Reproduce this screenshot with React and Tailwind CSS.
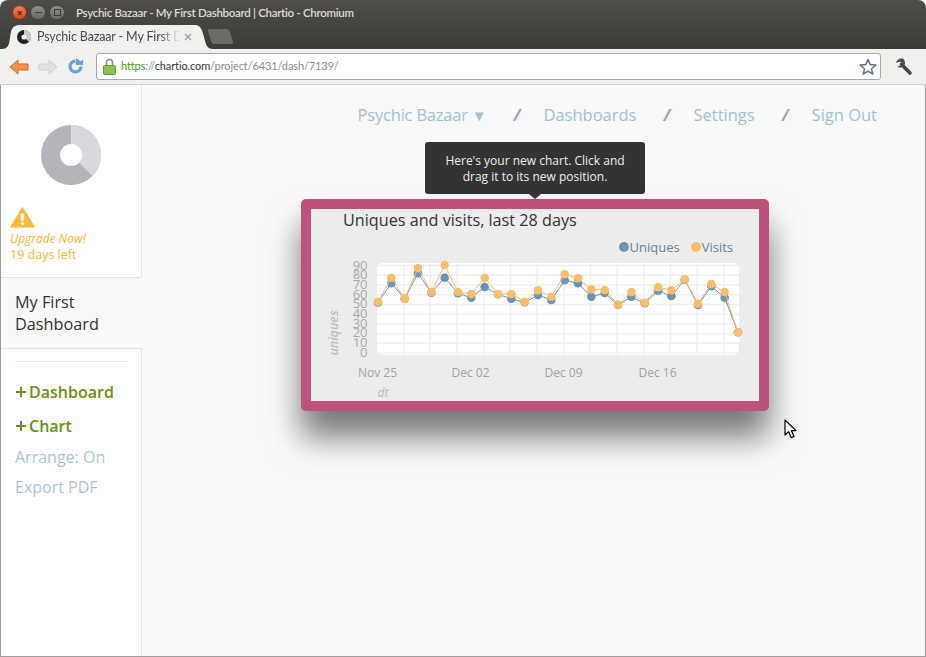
import React from 'react';

const XS = Array.from({ length: 28 }, (_, i) => 378 + (i * 40) / 3);
const UNIQUES = [302.5, 283.3, 298.7, 273.3, 292.7, 277.7, 293.3, 297.7, 287, 294.3, 298.7, 302.3, 295, 300, 280.3, 283.3, 296.7, 293, 305, 296.7, 303.3, 290.7, 296, 279.7, 305, 286.3, 297.7, 332.3];
const VISITS = [301.7, 277.7, 298.7, 268, 292, 265, 292, 294, 277.7, 294, 294, 301.7, 290.3, 296.7, 274.3, 278.3, 289.3, 290, 304.7, 292, 302.7, 287.3, 290.3, 279.3, 303.7, 284, 292, 332.3];
const Y_LABELS = [90, 80, 70, 60, 50, 40, 30, 20, 10, 0];
const X_LABELS = [['Nov 25', 377.5], ['Dec 02', 470.5], ['Dec 09', 563.5], ['Dec 16', 657.5]];

const toPoints = ys => ys.map((y, i) => `${XS[i].toFixed(1)},${y}`).join(' ');

function Chart() {
  // viewBox uses page coordinates, the card interior starts at 311,209
  return (
    <svg viewBox="311 259 448 142" className="block w-[448px] h-[142px] overflow-visible">
      <rect x="377" y="263" width="362" height="92" rx="6" fill="#ffffff" />
      {Array.from({ length: 13 }, (_, i) => (
        <line key={i} x1={403.7 + i * 26.67} x2={403.7 + i * 26.67} y1="263" y2="355" stroke="#f0f0f0" strokeWidth="1.5" />
      ))}
      {Array.from({ length: 10 }, (_, i) => (
        <line key={i} x1="377" x2="739" y1={265.6 + i * 9.72} y2={265.6 + i * 9.72} stroke="#f0f0f0" strokeWidth="1.5" />
      ))}
      {Y_LABELS.map((v, i) => (
        <text key={v} x="367.5" y={269.5 + i * 9.67} textAnchor="end" fontSize="13" fill="#a9a9a9">{v}</text>
      ))}
      {X_LABELS.map(([t, x]) => (
        <text key={t} x={x} y="377" textAnchor="middle" fontSize="12" fill="#a3a3a3">{t}</text>
      ))}
      <text x="383" y="397" textAnchor="middle" fontSize="12" fontStyle="italic" fill="#b9b9b9">dt</text>
      <text transform="translate(338,333) rotate(-90)" x="0" y="0" textAnchor="middle" fontSize="12.5" fontStyle="italic" fontWeight="600" fill="#bdbdbd">uniques</text>
      <polyline points={toPoints(UNIQUES)} fill="none" stroke="#6b94b4" strokeWidth="1" />
      {UNIQUES.map((y, i) => <circle key={i} cx={XS[i]} cy={y} r="4.3" fill="#6b94b4" />)}
      <polyline points={toPoints(VISITS)} fill="none" stroke="#fbbd68" strokeWidth="1" />
      {VISITS.map((y, i) => <circle key={i} cx={XS[i]} cy={y} r="4.3" fill="#fbbd68" />)}
    </svg>
  );
}

function Donut({ className, light, dark, hole }) {
  return (
    <svg viewBox="0 0 60 60" className={className}>
      <circle cx="30" cy="30" r="30" fill={dark} />
      <path d="M30 30V0A30 30 0 0 1 51.5 51Z" fill={light} />
      <circle cx="30" cy="30" r="11" fill={hole} />
    </svg>
  );
}

function Browser() {
  return (
    <div className="shrink-0 h-[85px] flex flex-col border-b border-[#d2d1cf]">
      <div className="h-[49px] flex flex-col bg-gradient-to-b from-[#4f4d48] to-[#3c3b36] rounded-t-[8px]">
        {/* title bar */}
        <div className="h-[25px] flex items-center pl-[12px]">
          <span className="w-[15px] h-[15px] rounded-full bg-gradient-to-b from-[#f08050] to-[#d8471e] border border-[#6a3a28] flex items-center justify-center text-[#5a2412] text-[10px] leading-none font-bold">×</span>
          <span className="ml-[3px] w-[16px] h-[15px] rounded-full bg-gradient-to-b from-[#8f8d87] to-[#6c6a65] border border-[#45433f] flex items-center justify-center">
            <span className="w-[7px] h-[1.5px] bg-[#3b3a36]" />
          </span>
          <span className="ml-[3px] w-[16px] h-[15px] rounded-full bg-gradient-to-b from-[#8f8d87] to-[#6c6a65] border border-[#45433f] flex items-center justify-center">
            <span className="w-[7px] h-[7px] border border-[#3b3a36]" />
          </span>
          <span className="ml-[11px] text-[11.5px] font-semibold text-[#dfdbd2] font-['Lato',sans-serif] tracking-[-0.3px] whitespace-nowrap">Psychic Bazaar - My First Dashboard | Chartio - Chromium</span>
        </div>
        {/* tab strip */}
        <div className="h-[24px] flex items-end">
          <div className="relative w-[211px] h-[24px] ml-[2px] flex items-center pl-[15px]">
            <svg viewBox="0 0 211 24" className="absolute inset-0 w-[211px] h-[24px]">
              <path d="M0 24C6 24 7 20 8 13C9 5 10 0 18 0H193C199 0 200 5 202 12C204 20 205 24 211 24Z" fill="#f1f0ee" />
            </svg>
            <Donut className="relative w-[14px] h-[14px]" light="#c9c9c9" dark="#222222" hole="#f1f0ee" />
            <span className="relative ml-[6px] w-[143px] overflow-hidden whitespace-nowrap text-[12.5px] leading-[16px] text-[#4a4a4a] font-['Lato',sans-serif] tracking-[-0.15px] [mask-image:linear-gradient(to_right,black_85%,transparent)]">Psychic Bazaar - My First Dashboard</span>
            <svg viewBox="0 0 8 8" className="relative ml-[4px] w-[8px] h-[8px]">
              <path d="M1 1L7 7M7 1L1 7" stroke="#a8a8a8" strokeWidth="1.6" />
            </svg>
          </div>
          <svg viewBox="0 0 26 15" className="w-[26px] h-[15px] mb-[5px] -ml-[5px]">
            <path d="M1 0H18C20 0 21 1 22 3L25 13C25 14 25 15 23 15H6C4 15 4 14 3 12L0 2C0 1 0 0 1 0Z" fill="#6c6b67" />
          </svg>
        </div>
      </div>
      {/* toolbar */}
      <div className="flex-1 flex items-center bg-[#f1f0ee] pl-[9px]">
        <svg viewBox="0 0 20 16" className="w-[20px] h-[16px]">
          <path d="M9 1L1 8L9 15V11H19V5H9Z" fill="#ee9153" stroke="#cf6a2c" strokeWidth="1" strokeLinejoin="round" />
        </svg>
        <svg viewBox="0 0 20 16" className="ml-[9px] w-[20px] h-[16px]">
          <path d="M11 1L19 8L11 15V11H1V5H11Z" fill="#e1e1df" stroke="#d2d2d0" strokeWidth="1" strokeLinejoin="round" />
        </svg>
        <svg viewBox="0 0 18 18" className="ml-[9px] w-[17px] h-[17px]">
          <path d="M9 3.2A5.8 5.8 0 1 0 14.8 9" fill="none" stroke="#6a9fd8" strokeWidth="3.4" />
          <path d="M9.5 0V7.5L17 7.5V1.5L14.5 3.5Z" fill="#6a9fd8" />
        </svg>
        <div className="ml-[12px] w-[785px] h-[27px] bg-white border border-[#a8a7a3] rounded-[3px] flex items-center pl-[6px] pr-[3px]">
          <svg viewBox="0 0 13 17" className="w-[13px] h-[17px]">
            <path d="M3.5 8V4.5A3 3 0 0 1 9.5 4.5V8" fill="none" stroke="#8d8d8d" strokeWidth="1.6" />
            <rect x="0.5" y="7.5" width="12" height="9" rx="1" fill="#8cc152" stroke="#5d9a2c" />
          </svg>
          <span className="ml-[5px] text-[11px] font-['Lato',sans-serif] tracking-[-0.12px] whitespace-nowrap text-[#8c8c8c]">
            <span className="text-[#3f9b0c]">https</span>://<span className="text-[#333333]">chartio.com</span>/project/6431/dash/7139/
          </span>
          <svg viewBox="0 0 18 18" className="ml-auto w-[18px] h-[18px]">
            <path d="M9 1.5L11.2 6.6L16.7 7.1L12.5 10.7L13.8 16.1L9 13.2L4.2 16.1L5.5 10.7L1.3 7.1L6.8 6.6Z" fill="none" stroke="#5c6f8c" strokeWidth="1.5" strokeLinejoin="round" />
          </svg>
        </div>
        <svg viewBox="0 0 18 18" className="ml-[14px] w-[18px] h-[18px]">
          <path d="M6.5 6.5L15 15" stroke="#4a4a48" strokeWidth="3.6" strokeLinecap="round" />
          <path d="M8.2 0.8C5 0 1.6 1.6 1 5L4.6 3.4L6.8 4.6L6.4 7.4L2.2 8.4C4.4 10.4 8.4 9.8 9.8 6.8C10.4 5 9.8 2.4 8.2 0.8Z" fill="#4a4a48" />
        </svg>
      </div>
    </div>
  );
}

function PlusItem({ label, className }) {
  return (
    <p className={`h-[22px] flex items-center gap-[3px] text-[16px] leading-[22px] font-semibold text-[#6a9113] whitespace-nowrap ${className}`}>
      <svg viewBox="0 0 10 10" className="w-[10px] h-[10px] ml-[1px]">
        <path d="M5 0V10M0 5H10" stroke="#6a9113" strokeWidth="2" />
      </svg>
      {label}
    </p>
  );
}

function Sidebar() {
  return (
    <aside className="w-[141px] shrink-0 flex flex-col">
      <div className="h-[193px] bg-white border-r border-b border-[#e4e4e4] flex flex-col pt-[40px]">
        <Donut className="w-[60px] h-[60px] ml-[40px]" light="#d8d9dc" dark="#b4b5ba" hole="#ffffff" />
        <svg viewBox="0 0 26 22" className="ml-[9px] mt-[21px] w-[25px] h-[22px]">
          <path d="M13 1L25.5 21.5H0.5Z" fill="#fdb93b" stroke="#fdb93b" strokeLinejoin="round" />
          <rect x="11.3" y="7" width="3.4" height="8" rx="1.2" fill="#ffffff" />
          <circle cx="13" cy="18" r="1.8" fill="#ffffff" />
        </svg>
        <p className="ml-[9px] mt-[3px] text-[12px] leading-[16px] italic font-medium text-[#fdb22e]">Upgrade Now!</p>
        <p className="ml-[9px] text-[12.5px] leading-[16px] font-medium text-[#fdb22e]">19 days left</p>
      </div>
      <div className="h-[71px] pl-[14px] pt-[13px] border-b border-[#e4e4e4] text-[16.25px] leading-[22px] text-[#333333]">My First<br />Dashboard</div>
      <div className="flex-1 bg-white border-r border-[#e4e4e4] px-[14px] pt-[12px]">
        <div className="border-t border-[#e6e6e6]" />
        <PlusItem label="Dashboard" className="mt-[19px]" />
        <PlusItem label="Chart" className="mt-[12px]" />
        <p className="mt-[9px] h-[22px] text-[16px] leading-[22px] text-[#a9c4da]">Arrange: On</p>
        <p className="mt-[8px] h-[22px] text-[16px] leading-[22px] text-[#a9c4da]">Export PDF</p>
      </div>
    </aside>
  );
}

function TopNav() {
  const slash = <span className="font-bold italic text-[#94a9b8] translate-x-[2px]">/</span>;
  return (
    <nav className="flex justify-end items-center gap-[25px] pr-[48px] pt-[18px] text-[16.5px] leading-[24px] text-[#a3bfd2]">
      <span className="tracking-[-0.2px]">Psychic Bazaar<span className="ml-[4px] text-[15px]">▼</span></span>
      {slash}
      <span>Dashboards</span>
      {slash}
      <span>Settings</span>
      {slash}
      <span>Sign Out</span>
    </nav>
  );
}

export default function App() {
  return (
    <div className="relative w-[926px] h-[657px] overflow-hidden flex flex-col bg-white font-['Open_Sans',sans-serif]">
      <Browser />
      <div className="flex-1 flex min-h-0 bg-[#f9f9f9] border-x border-b border-[#a09d98]">
        <Sidebar />
        <main className="flex-1">
          <TopNav />
        </main>
      </div>

      {/* tooltip */}
      <div className="absolute left-[425px] top-[142px] w-[220px] h-[52px] bg-[#333333] rounded-[3px] pt-[11px] text-center text-[12px] leading-[16px] text-[#eeeeee]">
        Here's your new chart. Click and<br />drag it to its new position.
        <span className="absolute left-[104px] top-[52px] border-x-[6px] border-x-transparent border-t-[5px] border-t-[#333333]" />
      </div>

      {/* dragged chart card */}
      <div className="absolute left-[301px] top-[199px] w-[468px] h-[212px] border-[10px] border-[#bd527c] rounded-[5px] bg-[#ececec] shadow-[0_26px_32px_0_rgba(0,0,0,0.52)]">
        <h2 className="ml-[32px] text-[16.2px] leading-[22px] text-[#333333]">Uniques and visits, last 28 days</h2>
        <div className="flex justify-end items-center pr-[26px] mt-[6px] h-[20px] text-[13px] leading-[18px] text-[#6f7f8c]">
          <span className="w-[10px] h-[10px] rounded-full bg-[#6b94b4]" />
          <span className="ml-[1px]">Uniques</span>
          <span className="ml-[11px] w-[10px] h-[10px] rounded-full bg-[#fbbd68]" />
          <span className="ml-[1px]">Visits</span>
        </div>
        <div className="mt-[2px]">
          <Chart />
        </div>
      </div>

      {/* mouse pointer */}
      <svg viewBox="0 0 14 21" className="absolute left-[784px] top-[419px] w-[14px] h-[21px]">
        <path d="M1 1V16L4.6 12.6L7.2 18.6L10 17.4L7.4 11.6H12Z" fill="#ffffff" stroke="#000000" strokeWidth="1.2" strokeLinejoin="round" />
      </svg>
    </div>
  );
}
